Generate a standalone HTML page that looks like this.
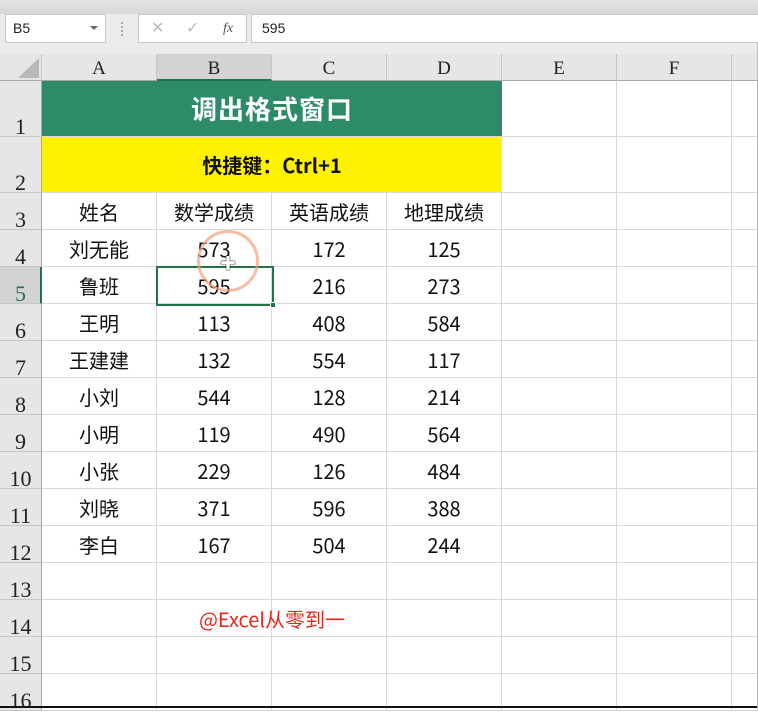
<!DOCTYPE html>
<html><head><meta charset="utf-8"><style>
*{margin:0;padding:0;box-sizing:border-box}
body{width:758px;height:708px;overflow:hidden;background:#fff;position:relative;font-family:"Noto Sans CJK SC","Liberation Sans",sans-serif}
.a{position:absolute}
.top{left:0;top:0;width:758px;height:14px;background:linear-gradient(#e4e4e4,#d8d8d8)}
.bar{left:0;top:14px;width:758px;height:40px;background:#ececec}
.box{position:absolute;background:#fff;border:1px solid #c8c8c8;font-family:"Liberation Sans",sans-serif}
.ch{position:absolute;top:54px;height:27px;background:#e6e6e6;border-right:1px solid #c6c6c6;border-bottom:1px solid #a9a9a9;font-family:"Liberation Serif",serif;font-size:19px;color:#222;text-align:center;line-height:30px}
.rh{position:absolute;left:0;width:42px;background:#e6e6e6;border-right:1px solid #a9a9a9;border-bottom:1px solid #c6c6c6;font-family:"Liberation Serif",serif;font-size:22px;color:#222;text-align:center}
.rh span{position:absolute;bottom:-4px;left:0;width:41px}
.row{position:absolute;left:42px;width:716px}
.c{position:absolute;top:0;height:100%;border-right:1px solid #d9d9d9;border-bottom:1px solid #d9d9d9;text-align:center;font-size:20px;line-height:1;color:#111;display:flex;align-items:center;justify-content:center;padding-top:1px}
</style></head><body>
<div class="a top"></div>
<div class="a bar"></div>
<div class="box" style="left:5px;top:14px;width:101px;height:29px;font-size:14px;line-height:27px;padding-left:7px;color:#222">B5<span style="position:absolute;right:7px;top:11px;width:0;height:0;border-left:4px solid transparent;border-right:4px solid transparent;border-top:4px solid #666"></span></div>
<div class="a" style="left:121px;top:22px;width:2px;height:14px;border-left:2px dotted #aaa"></div>
<div class="box" style="left:138px;top:14px;width:109px;height:29px;color:#bbb;font-size:16px;line-height:27px"><span style="position:absolute;left:12px">✕</span><span style="position:absolute;left:47px">✓</span><span style="position:absolute;left:84px;color:#555;font-family:'Liberation Serif',serif;font-style:italic;font-size:14px">fx</span></div>
<div class="box" style="left:251px;top:14px;width:510px;height:29px;font-size:14px;line-height:27px;padding-left:10px;color:#222">595</div>

<div class="a" style="left:0;top:54px;width:42px;height:27px;background:#e6e6e6;border-right:1px solid #c6c6c6;border-bottom:1px solid #a9a9a9"></div>
<div class="a" style="left:18px;top:58px;width:0;height:0;border-left:21px solid transparent;border-bottom:20px solid #b8b8b8"></div>
<div class="ch" style="left:42px;width:115px">A</div>
<div class="ch" style="left:157px;width:115px;background:#d3d3d3;border-bottom:2px solid #217346">B</div>
<div class="ch" style="left:272px;width:115px">C</div>
<div class="ch" style="left:387px;width:115px">D</div>
<div class="ch" style="left:502px;width:115px">E</div>
<div class="ch" style="left:617px;width:115px">F</div>
<div class="ch" style="left:732px;width:26px"></div>

<div class="rh" style="top:81px;height:56px"><span>1</span></div>
<div class="rh" style="top:137px;height:56px"><span>2</span></div>
<div class="rh" style="top:193px;height:37px"><span>3</span></div>
<div class="rh" style="top:230px;height:37px"><span>4</span></div>
<div class="rh" style="top:267px;height:37px;background:#d3d3d3;border-right:2px solid #217346;color:#217346"><span>5</span></div>
<div class="rh" style="top:304px;height:37px"><span>6</span></div>
<div class="rh" style="top:341px;height:37px"><span>7</span></div>
<div class="rh" style="top:378px;height:37px"><span>8</span></div>
<div class="rh" style="top:415px;height:37px"><span>9</span></div>
<div class="rh" style="top:452px;height:37px"><span>10</span></div>
<div class="rh" style="top:489px;height:37px"><span>11</span></div>
<div class="rh" style="top:526px;height:37px"><span>12</span></div>
<div class="rh" style="top:563px;height:37px"><span>13</span></div>
<div class="rh" style="top:600px;height:37px"><span>14</span></div>
<div class="rh" style="top:637px;height:37px"><span>15</span></div>
<div class="rh" style="top:674px;height:37px"><span>16</span></div>

<div class="row" style="top:81px;height:56px">
<div class="c" style="left:0;width:460px;background:#2e8b68;color:#fff;font-weight:bold;font-size:26px;border-right:none;letter-spacing:1px">调出格式窗口</div>
<div class="c" style="left:460px;width:115px"></div><div class="c" style="left:575px;width:115px"></div><div class="c" style="left:690px;width:26px"></div>
</div>
<div class="row" style="top:137px;height:56px">
<div class="c" style="left:0;width:460px;background:#fff200;font-weight:bold;font-size:20px;border-right:none">快捷键：Ctrl+1</div>
<div class="c" style="left:460px;width:115px"></div><div class="c" style="left:575px;width:115px"></div><div class="c" style="left:690px;width:26px"></div>
</div>

<div class="row" style="top:193px;height:37px"><div class="c" style="left:0;width:115px">姓名</div><div class="c" style="left:115px;width:115px">数学成绩</div><div class="c" style="left:230px;width:115px">英语成绩</div><div class="c" style="left:345px;width:115px">地理成绩</div><div class="c" style="left:460px;width:115px"></div><div class="c" style="left:575px;width:115px"></div><div class="c" style="left:690px;width:26px"></div></div>
<div class="row" style="top:230px;height:37px"><div class="c" style="left:0;width:115px">刘无能</div><div class="c" style="left:115px;width:115px">573</div><div class="c" style="left:230px;width:115px">172</div><div class="c" style="left:345px;width:115px">125</div><div class="c" style="left:460px;width:115px"></div><div class="c" style="left:575px;width:115px"></div><div class="c" style="left:690px;width:26px"></div></div>
<div class="row" style="top:267px;height:37px"><div class="c" style="left:0;width:115px">鲁班</div><div class="c" style="left:115px;width:115px">595</div><div class="c" style="left:230px;width:115px">216</div><div class="c" style="left:345px;width:115px">273</div><div class="c" style="left:460px;width:115px"></div><div class="c" style="left:575px;width:115px"></div><div class="c" style="left:690px;width:26px"></div></div>
<div class="row" style="top:304px;height:37px"><div class="c" style="left:0;width:115px">王明</div><div class="c" style="left:115px;width:115px">113</div><div class="c" style="left:230px;width:115px">408</div><div class="c" style="left:345px;width:115px">584</div><div class="c" style="left:460px;width:115px"></div><div class="c" style="left:575px;width:115px"></div><div class="c" style="left:690px;width:26px"></div></div>
<div class="row" style="top:341px;height:37px"><div class="c" style="left:0;width:115px">王建建</div><div class="c" style="left:115px;width:115px">132</div><div class="c" style="left:230px;width:115px">554</div><div class="c" style="left:345px;width:115px">117</div><div class="c" style="left:460px;width:115px"></div><div class="c" style="left:575px;width:115px"></div><div class="c" style="left:690px;width:26px"></div></div>
<div class="row" style="top:378px;height:37px"><div class="c" style="left:0;width:115px">小刘</div><div class="c" style="left:115px;width:115px">544</div><div class="c" style="left:230px;width:115px">128</div><div class="c" style="left:345px;width:115px">214</div><div class="c" style="left:460px;width:115px"></div><div class="c" style="left:575px;width:115px"></div><div class="c" style="left:690px;width:26px"></div></div>
<div class="row" style="top:415px;height:37px"><div class="c" style="left:0;width:115px">小明</div><div class="c" style="left:115px;width:115px">119</div><div class="c" style="left:230px;width:115px">490</div><div class="c" style="left:345px;width:115px">564</div><div class="c" style="left:460px;width:115px"></div><div class="c" style="left:575px;width:115px"></div><div class="c" style="left:690px;width:26px"></div></div>
<div class="row" style="top:452px;height:37px"><div class="c" style="left:0;width:115px">小张</div><div class="c" style="left:115px;width:115px">229</div><div class="c" style="left:230px;width:115px">126</div><div class="c" style="left:345px;width:115px">484</div><div class="c" style="left:460px;width:115px"></div><div class="c" style="left:575px;width:115px"></div><div class="c" style="left:690px;width:26px"></div></div>
<div class="row" style="top:489px;height:37px"><div class="c" style="left:0;width:115px">刘晓</div><div class="c" style="left:115px;width:115px">371</div><div class="c" style="left:230px;width:115px">596</div><div class="c" style="left:345px;width:115px">388</div><div class="c" style="left:460px;width:115px"></div><div class="c" style="left:575px;width:115px"></div><div class="c" style="left:690px;width:26px"></div></div>
<div class="row" style="top:526px;height:37px"><div class="c" style="left:0;width:115px">李白</div><div class="c" style="left:115px;width:115px">167</div><div class="c" style="left:230px;width:115px">504</div><div class="c" style="left:345px;width:115px">244</div><div class="c" style="left:460px;width:115px"></div><div class="c" style="left:575px;width:115px"></div><div class="c" style="left:690px;width:26px"></div></div>
<div class="row" style="top:563px;height:37px"><div class="c" style="left:0;width:115px"></div><div class="c" style="left:115px;width:115px"></div><div class="c" style="left:230px;width:115px"></div><div class="c" style="left:345px;width:115px"></div><div class="c" style="left:460px;width:115px"></div><div class="c" style="left:575px;width:115px"></div><div class="c" style="left:690px;width:26px"></div></div>
<div class="row" style="top:600px;height:37px"><div class="c" style="left:0;width:115px"></div><div class="c" style="left:115px;width:115px"></div><div class="c" style="left:230px;width:115px"></div><div class="c" style="left:345px;width:115px"></div><div class="c" style="left:460px;width:115px"></div><div class="c" style="left:575px;width:115px"></div><div class="c" style="left:690px;width:26px"></div></div>
<div class="row" style="top:637px;height:37px"><div class="c" style="left:0;width:115px"></div><div class="c" style="left:115px;width:115px"></div><div class="c" style="left:230px;width:115px"></div><div class="c" style="left:345px;width:115px"></div><div class="c" style="left:460px;width:115px"></div><div class="c" style="left:575px;width:115px"></div><div class="c" style="left:690px;width:26px"></div></div>
<div class="row" style="top:674px;height:37px"><div class="c" style="left:0;width:115px"></div><div class="c" style="left:115px;width:115px"></div><div class="c" style="left:230px;width:115px"></div><div class="c" style="left:345px;width:115px"></div><div class="c" style="left:460px;width:115px"></div><div class="c" style="left:575px;width:115px"></div><div class="c" style="left:690px;width:26px"></div></div>

<div class="a" style="left:157px;top:605px;width:230px;text-align:center;color:#e8281e;font-size:20px;line-height:28px">@Excel从零到一</div>

<div class="a" style="left:156px;top:266px;width:118px;height:40px;border:2px solid #217346"></div>
<div class="a" style="left:270px;top:302px;width:6px;height:6px;background:#217346;border:1px solid #fff"></div>
<div class="a" style="left:197px;top:230px;width:62px;height:62px;border-radius:50%;border:3px solid rgba(245,160,120,0.7)"></div>
<div class="a" style="left:220px;top:250px;font-size:16px;color:#fff;text-shadow:0 0 1px #000,0 0 1px #000,0 0 1px #000;font-weight:bold">✚</div>
<div class="a" style="left:0;top:706px;width:758px;height:2px;background:#111"></div>
<div class="a" style="left:757px;top:42px;width:1px;height:666px;background:#bbb"></div>
</body></html>
